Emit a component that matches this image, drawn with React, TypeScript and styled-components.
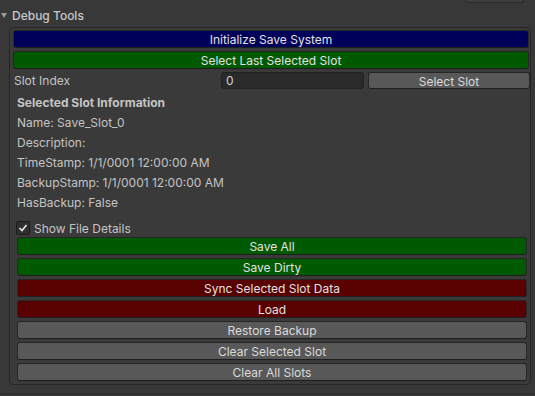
import styled, { createGlobalStyle } from 'styled-components';

const GlobalStyle = createGlobalStyle`
  html, body {
    margin: 0;
    padding: 0;
    background-color: #383838;
  }
  body {
    font-family: Inter, "Noto Sans", "Liberation Sans", sans-serif;
    font-size: 12px;
    color: #c4c4c4;
  }
`;

const Screen = styled.div`
  width: 535px;
  height: 396px;
  overflow: hidden;
  display: flex;
  flex-direction: column;
  background-color: #383838;
`;

const TopStrip = styled.div`
  height: 3px;
  display: flex;
  justify-content: flex-end;
  padding-right: 11px;
`;

const CutButton = styled.div`
  width: 57px;
  height: 2px;
  background-color: #3e3e3e;
  border: 1px solid #2a2a2a;
  border-top: none;
  border-radius: 0 0 3px 3px;
`;

const Header = styled.div`
  height: 24px;
  padding-top: 1px;
  box-sizing: border-box;
  display: flex;
  align-items: center;
  gap: 5px;
  padding-left: 1px;
  color: #c8c8c8;
  font-weight: 500;
`;

const Panel = styled.div`
  box-sizing: border-box;
  width: 522px;
  margin-left: 9px;
  padding: 2px 1px 3px 3px;
  border: 1px solid #262626;
  border-radius: 4px;
  background-color: #3a3a3a;
  display: flex;
  flex-direction: column;
  gap: 3px;
`;

const tones = {
  blue: '#00005b',
  green: '#005a00',
  red: '#590000',
  gray: '#585858',
};

const Button = styled.button<{ tone: keyof typeof tones }>`
  box-sizing: border-box;
  height: 18px;
  width: 100%;
  padding: 1px 0 0;
  margin: 0;
  border: 1px solid #262626;
  border-bottom-color: #1e1e1e;
  border-radius: 3px;
  background-color: ${p => tones[p.tone]};
  color: ${p => (p.tone === 'gray' ? '#dadada' : '#e2e2e2')};
  font-family: inherit;
  font-size: 12px;
  line-height: 15px;
  text-align: center;
`;

const SlotRow = styled.div`
  display: grid;
  grid-template-columns: 206px 143px 162px;
  column-gap: 2px;
  height: 17px;
  align-items: center;

  & > :last-child {
    margin-left: 2px;
    height: 17px;
  }
`;

const Label = styled.span`
  padding-left: 1px;
  color: #c4c4c4;
`;

const Field = styled.div`
  box-sizing: border-box;
  height: 17px;
  padding-left: 4px;
  background-color: #2a2a2a;
  border: 1px solid #212121;
  border-radius: 3px;
  color: #d2d2d2;
  line-height: 15px;
`;

const Info = styled.div`
  display: flex;
  flex-direction: column;
  padding: 0 2px 0 4px;
`;

const InfoTitle = styled.div`
  height: 20px;
  line-height: 21px;
  font-weight: 700;
  color: #c4c4c4;
`;

const InfoLine = styled.div`
  height: 20px;
  line-height: 22px;
  color: #c4c4c4;
`;

const CheckRow = styled.label`
  display: flex;
  align-items: center;
  gap: 4px;
  height: 14px;
  margin: 9px 0 2px -1px;
  color: #c4c4c4;
`;

const CheckBox = styled.span`
  box-sizing: border-box;
  width: 14px;
  height: 14px;
  border: 1px solid #1b1b1b;
  border-radius: 2px;
  background-color: #2f2f2f;
  display: flex;
  align-items: center;
  justify-content: center;
`;

const ButtonStack = styled.div`
  display: flex;
  flex-direction: column;
  gap: 3px;
`;

const Footer = styled.div`
  margin-top: 8px;
  flex: 1;
  border-top: 1px solid #2c2c2c;
  background-color: #353535;
`;

const actions: { label: string; tone: keyof typeof tones }[] = [
  { label: 'Save All', tone: 'green' },
  { label: 'Save Dirty', tone: 'green' },
  { label: 'Sync Selected Slot Data', tone: 'red' },
  { label: 'Load', tone: 'red' },
  { label: 'Restore Backup', tone: 'gray' },
  { label: 'Clear Selected Slot', tone: 'gray' },
  { label: 'Clear All Slots', tone: 'gray' },
];

const info = [
  'Name: Save_Slot_0',
  'Description:',
  'TimeStamp: 1/1/0001 12:00:00 AM',
  'BackupStamp: 1/1/0001 12:00:00 AM',
  'HasBackup: False',
];

export default function App() {
  return (
    <Screen>
      <GlobalStyle />
      <TopStrip>
        <CutButton />
      </TopStrip>
      <Header>
        <svg width="6" height="5" viewBox="0 0 6 5">
          <polygon points="0,0 6,0 3,5" fill="#9a9a9a" />
        </svg>
        Debug Tools
      </Header>
      <Panel>
        <Button tone="blue">Initialize Save System</Button>
        <Button tone="green">Select Last Selected Slot</Button>
        <SlotRow>
          <Label>Slot Index</Label>
          <Field>0</Field>
          <Button tone="gray">Select Slot</Button>
        </SlotRow>
        <Info>
          <InfoTitle>Selected Slot Information</InfoTitle>
          {info.map(line => (
            <InfoLine key={line}>{line}</InfoLine>
          ))}
          <CheckRow>
            <CheckBox>
              <svg width="10" height="10" viewBox="0 0 10 10">
                <polyline points="1.5,5 4,7.5 8.5,2" fill="none" stroke="#e8e8e8" strokeWidth="1.6" />
              </svg>
            </CheckBox>
            Show File Details
          </CheckRow>
          <ButtonStack>
            {actions.map(a => (
              <Button key={a.label} tone={a.tone}>
                {a.label}
              </Button>
            ))}
          </ButtonStack>
        </Info>
      </Panel>
      <Footer />
    </Screen>
  );
}
